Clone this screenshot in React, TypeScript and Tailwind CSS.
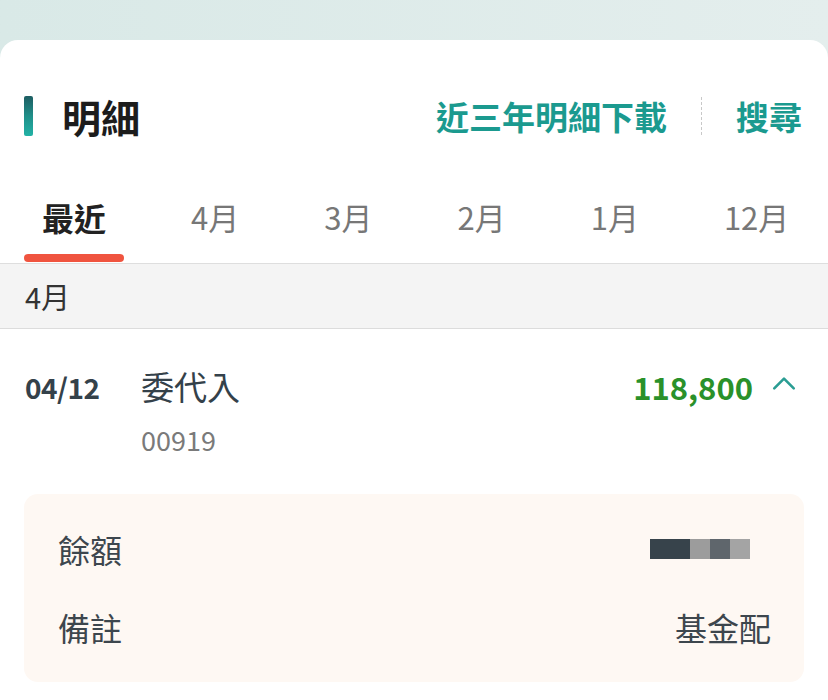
import React from "react";

const TABS = ["最近", "4月", "3月", "2月", "1月", "12月"];

export default function App() {
  return (
    <div
      className="w-[828px] h-[700px] overflow-hidden bg-gradient-to-r from-[#d9e9e7] to-[#e4eeed] pt-[40px]"
      style={{ fontFamily: '"Noto Sans CJK TC", "Noto Sans", sans-serif' }}
    >
      <div className="bg-white rounded-t-[18px] h-full pt-[50px]">
        {/* Header */}
        <div className="flex items-center h-[52px] pl-[24px] pr-[26px]">
          <div className="w-[9px] h-[40px] rounded-[2px] bg-gradient-to-b from-[#1d5d62] via-[#1f8f89] to-[#22b2a6]" />
          <h1 className="ml-[29px] text-[39px] leading-none font-bold text-[#1c1c1c]">明細</h1>
          <div className="ml-auto flex items-center">
            <span className="text-[33px] leading-none font-semibold text-[#1b9a8f]">近三年明細下載</span>
            <div className="mx-[34px] h-[38px] border-l border-dashed border-[#c8c8c8]" />
            <span className="text-[33px] leading-none font-semibold text-[#1b9a8f]">搜尋</span>
          </div>
        </div>

        {/* Tabs */}
        <div className="flex gap-[85px] pl-[42px] pt-[55px] border-b border-[#dedede]">
          {TABS.map((t, i) => (
            <div key={t} className="flex flex-col items-center">
              <span
                className={
                  i === 0
                    ? "text-[32px] leading-[40px] font-bold text-[#222] whitespace-nowrap"
                    : "text-[31px] leading-[40px] text-[#777] whitespace-nowrap"
                }
              >
                {t}
              </span>
              <div
                className={
                  i === 0
                    ? "mt-[17px] mb-px -mx-[18px] w-[100px] h-[8px] rounded-full bg-[#f0543f] shrink-0"
                    : "mt-[17px] mb-px h-[8px]"
                }
              />
            </div>
          ))}
        </div>

        {/* Month header */}
        <div className="h-[65px] flex items-center pl-[25px] bg-[#f4f4f4] border-b border-[#dcdcdc]">
          <span className="text-[29px] leading-none text-[#333]">4月</span>
        </div>

        {/* Row */}
        <div className="pt-[38px] pl-[25px] pr-[31px]">
          <div className="flex items-center h-[40px]">
            <span className="w-[116px] text-[28px] font-bold text-[#34414a] tracking-[-0.5px]">04/12</span>
            <span className="text-[33px] text-[#34414a]">委代入</span>
            <span className="ml-auto text-[31px] font-bold text-[#2a912a]">118,800</span>
            <svg viewBox="0 0 24 24" className="ml-[18px] w-[26px] h-[26px] -mt-[6px]" fill="none" stroke="#2a9d93" strokeWidth={2.4} strokeLinecap="round" strokeLinejoin="round">
              <path d="M3 16 L12 7 L21 16" />
            </svg>
          </div>
          <div className="mt-[16px] pl-[116px] text-[27px] leading-[34px] text-[#7a7a7a]">00919</div>
        </div>

        {/* Detail */}
        <div className="mx-[24px] mt-[37px] rounded-[14px] bg-[#fef8f3] pl-[34px] pr-[33px] py-[35px]">
          <div className="flex items-center h-[40px]">
            <span className="text-[32px] text-[#3d464d]">餘額</span>
            <div className="ml-auto mr-[21px] flex h-[20px]">
              <div className="w-[40px] bg-[#37434b]" />
              <div className="w-[20px] bg-[#9c9c9c]" />
              <div className="w-[20px] bg-[#5f666c]" />
              <div className="w-[20px] bg-[#a4a4a4]" />
            </div>
          </div>
          <div className="flex items-center h-[40px] mt-[38px]">
            <span className="text-[32px] text-[#3d464d]">備註</span>
            <span className="ml-auto text-[32px] text-[#3d464d]">基金配</span>
          </div>
        </div>
      </div>
    </div>
  );
}
